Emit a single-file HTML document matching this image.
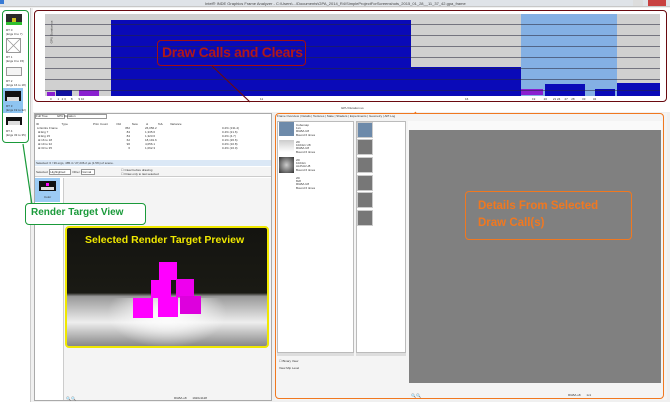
<!DOCTYPE html>
<html><head><style>
*{margin:0;padding:0;box-sizing:border-box}
body{width:670px;height:402px;overflow:hidden;background:#f0f0f0;font-family:"Liberation Sans",sans-serif;position:relative;font-size:3px;color:#222}
.a{position:absolute}
.t{position:absolute;font-size:3px;color:#333;white-space:nowrap}
</style></head><body>
<div class="a" style="left:0;top:0;width:670px;height:7px;background:#dfe3e8;border-bottom:1px solid #c8c8c8"></div>
<div class="t" style="left:205px;top:1px;font-size:4px;color:#444">Intel® INDE Graphics Frame Analyzer - C:\Users\...\Documents\GPA_2014_R4\SimpleProjectForScreenshots_2015_01_28__11_37_42.gpa_frame</div>
<div class="a" style="left:633px;top:0;width:10px;height:6px;background:#ddd"></div>
<div class="a" style="left:648px;top:0;width:18px;height:6px;background:#c84040"></div>
<div class="a" style="left:0;top:0;width:4px;height:4px;background:#3a7bd5"></div>
<div class="t" style="left:455px;top:8px">Go Graph &nbsp;&nbsp;&nbsp; ■ ■ GPU Duration &nbsp;&nbsp;&nbsp;&nbsp;&nbsp;&nbsp;&nbsp; ■ ■ GPU Duration &nbsp;&nbsp;&nbsp;&nbsp;&nbsp;&nbsp;&nbsp;&nbsp; ■ 37.2ms</div>

<div class="a" style="left:0;top:8px;width:31px;height:394px;background:#fff;border-right:1px solid #ccc"></div>
<div class="a" style="left:6px;top:14px;width:16px;height:11px;background:#2a2a2a"></div>
<div class="a" style="left:6px;top:22px;width:16px;height:3px;background:#2fbf2f"></div>
<div class="a" style="left:12px;top:18px;width:4px;height:4px;background:#d0c020"></div>
<div class="t" style="left:6px;top:28px">RT 0<br>(Ergs 0 to 7)</div>
<div class="a" style="left:6px;top:38px;width:15px;height:15px;border:1px solid #999;background:#fff"></div>
<svg class="a" style="left:6px;top:38px" width="15" height="15"><path d="M1 1L14 14M14 1L1 14" stroke="#999" stroke-width=".8"/></svg>
<div class="t" style="left:6px;top:55px">RT 1<br>(Ergs 0 to 15)</div>
<div class="a" style="left:6px;top:67px;width:16px;height:9px;border:1px solid #999;background:#f4f4f4"></div>
<div class="t" style="left:6px;top:79px">RT 2<br>(Ergs 16 to 18)</div>
<div class="a" style="left:3px;top:88px;width:20px;height:25px;background:#8ec4f0"></div>
<div class="a" style="left:5px;top:91px;width:16px;height:10px;background:#111"></div>
<div class="a" style="left:7px;top:97px;width:12px;height:4px;background:#ddd"></div>
<div class="t" style="left:6px;top:104px">RT 3<br>(Ergs 19 to 32)</div>
<div class="a" style="left:6px;top:117px;width:16px;height:8px;background:#111"></div>
<div class="a" style="left:8px;top:121px;width:12px;height:4px;background:#ddd"></div>
<div class="t" style="left:6px;top:129px">RT 4<br>(Ergs 33 to 35)</div>
<div class="a" style="left:2px;top:10px;width:27px;height:133px;border:1.5px solid #1a9a3a;border-radius:4px"></div>

<div class="a" style="left:33px;top:8px;width:637px;height:104px;background:#fff"></div>
<div class="a" style="left:45px;top:14px;width:615px;height:82px;background:#d0d0d0"></div>
<div class="a" style="left:111px;top:20px;width:300px;height:76px;background:#0a0ab8"></div>
<div class="a" style="left:411px;top:67px;width:110px;height:29px;background:#0a0ab8"></div>
<div class="a" style="left:521px;top:14px;width:96px;height:82px;background:#70a8e8;opacity:.8"></div>
<div class="a" style="left:521px;top:89px;width:22px;height:6px;background:#8a20d0"></div>
<div class="a" style="left:545px;top:84px;width:40px;height:12px;background:#0a0ab8"></div>
<div class="a" style="left:595px;top:89px;width:20px;height:7px;background:#0a0ab8"></div>
<div class="a" style="left:617px;top:83px;width:43px;height:13px;background:#0a0ab8"></div>
<div class="a" style="left:47px;top:92px;width:8px;height:4px;background:#8a20d0"></div>
<div class="a" style="left:56px;top:90px;width:16px;height:6px;background:#1010a0"></div>
<div class="a" style="left:79px;top:90px;width:20px;height:6px;background:#8a20d0"></div>
<div class="a" style="left:45px;top:14px;width:615px;height:82px;background-image:repeating-linear-gradient(to bottom,transparent 0,transparent 10px,rgba(40,40,60,.55) 10px,rgba(40,40,60,.55) 11px)"></div>
<div class="t" style="left:40px;top:30px;transform:rotate(-90deg);font-size:3px">GPU Duration us</div>
<div class="t" style="left:50px;top:97px">0 &nbsp;&nbsp;&nbsp;&nbsp;&nbsp; 1 &nbsp; 2 3 &nbsp;&nbsp;&nbsp;&nbsp; 8 &nbsp;&nbsp;&nbsp;&nbsp;&nbsp; 9 10</div>
<div class="t" style="left:260px;top:97px">11</div>
<div class="t" style="left:465px;top:97px">16</div>
<div class="t" style="left:532px;top:97px">19 &nbsp;&nbsp;&nbsp;&nbsp;&nbsp;&nbsp;&nbsp;&nbsp; 20 &nbsp;&nbsp;&nbsp;&nbsp;&nbsp; 21 24 &nbsp;&nbsp;&nbsp; 27 &nbsp;&nbsp; 28 &nbsp;&nbsp;&nbsp;&nbsp;&nbsp;&nbsp;&nbsp; 33 &nbsp;&nbsp;&nbsp;&nbsp;&nbsp;&nbsp;&nbsp; 34</div>
<div class="a" style="left:34px;top:10px;width:633px;height:92px;border:1.5px solid #6a0a10;border-radius:4px"></div>
<div class="a" style="left:157px;top:40px;width:149px;height:26px;border:1.5px solid #a01010;border-radius:4px"></div>
<div class="t" style="left:162px;top:44px;font-size:14px;color:#b01818;font-weight:bold;letter-spacing:-0.3px">Draw Calls and Clears</div>
<svg class="a" style="left:0;top:0" width="670" height="402"><path d="M212 66L250 102" stroke="#6a0a10" stroke-width="1.2"/><path d="M415 112L466 192" stroke="#f07820" stroke-width="1.5"/><path d="M23 144L32 205" stroke="#1a9a3a" stroke-width="1.2"/></svg>
<div class="t" style="left:341px;top:106px">GPU Duration us</div>

<div class="a" style="left:34px;top:113px;width:238px;height:288px;background:#fff;border:1px solid #aaa"></div>
<div class="a" style="left:35px;top:114px;width:30px;height:5px;border:1px solid #999;background:#fff"></div>
<div class="a" style="left:67px;top:114px;width:40px;height:5px;border:1px solid #999;background:#fff"></div>
<div class="t" style="left:36px;top:114px">Full Tree &nbsp;&nbsp;&nbsp;&nbsp;&nbsp;&nbsp;&nbsp;&nbsp;&nbsp; GPU Duration</div>
<div class="t" style="left:36px;top:122px">ID &nbsp;&nbsp;&nbsp;&nbsp;&nbsp;&nbsp;&nbsp;&nbsp;&nbsp;&nbsp;&nbsp;&nbsp;&nbsp;&nbsp;&nbsp;&nbsp;&nbsp;&nbsp;&nbsp;&nbsp;&nbsp;&nbsp;&nbsp;&nbsp;&nbsp; Type &nbsp;&nbsp;&nbsp;&nbsp;&nbsp;&nbsp;&nbsp;&nbsp;&nbsp;&nbsp;&nbsp;&nbsp;&nbsp;&nbsp;&nbsp;&nbsp;&nbsp;&nbsp;&nbsp;&nbsp;&nbsp;&nbsp;&nbsp;&nbsp;&nbsp;&nbsp;&nbsp;&nbsp; Prim Count &nbsp;&nbsp;&nbsp;&nbsp;&nbsp;&nbsp;&nbsp;&nbsp; Old &nbsp;&nbsp;&nbsp;&nbsp;&nbsp;&nbsp;&nbsp;&nbsp;&nbsp;&nbsp;&nbsp; New &nbsp;&nbsp;&nbsp;&nbsp;&nbsp;&nbsp;&nbsp;&nbsp; Δ &nbsp;&nbsp;&nbsp;&nbsp;&nbsp;&nbsp;&nbsp;&nbsp;&nbsp;&nbsp; %Δ &nbsp;&nbsp;&nbsp;&nbsp;&nbsp;&nbsp;&nbsp; Variance</div>
<div class="t" style="left:37px;top:126px;line-height:4px">⊟ Entire Frame<br>&nbsp;⊞ Erg 7<br>&nbsp;⊞ Erg 15<br>&nbsp;⊞ 16 to 18<br>&nbsp;⊞ 19 to 32<br>&nbsp;⊞ 33 to 35</div>
<div class="t" style="left:125px;top:126px;line-height:4px;text-align:right">352<br>84<br>84<br>62<br>96<br>6</div>
<div class="t" style="left:145px;top:126px;line-height:4px">26,056.2<br>1,335.6<br>1,323.6<br>18,191.6<br>4,056.1<br>1,062.3</div>
<div class="t" style="left:222px;top:126px;line-height:4px">0.2% (131.2)<br>0.4% (21.6)<br>0.2% (4.7)<br>0.1% (26.6)<br>0.2% (10.8)<br>0.4% (16.0)</div>
<div class="a" style="left:35px;top:160px;width:236px;height:6px;background:#dbe8f6"></div>
<div class="t" style="left:36px;top:161px">Selected: 6 / 39 ergs, 485.4 / 27,236.2 µs (1.5%) of scene.</div>
<div class="a" style="left:35px;top:167px;width:236px;height:10px;background:#f4f4f4;border-bottom:1px solid #ccc"></div>
<div class="t" style="left:36px;top:170px">Selected &nbsp;<span style="border:1px solid #999;background:#fff">Highlighted &nbsp;&nbsp;&nbsp;&nbsp;&nbsp;</span> Other <span style="border:1px solid #999;background:#fff">Normal &nbsp;&nbsp;</span></div>
<div class="t" style="left:121px;top:168px;line-height:4px">☐ Clear before drawing<br>☐ Draw only to last selected</div>
<div class="a" style="left:35px;top:178px;width:25px;height:24px;background:#9ccbf4"></div>
<div class="a" style="left:39px;top:181px;width:17px;height:10px;background:#111"></div>
<div class="a" style="left:41px;top:187px;width:13px;height:3px;background:#ddd"></div>
<div class="a" style="left:46px;top:183px;width:3px;height:3px;background:#f0f"></div>
<div class="t" style="left:44px;top:195px">Color</div>
<div class="a" style="left:63px;top:178px;width:208px;height:222px;background:#f4f4f4;border-left:1px solid #ccc"></div>
<div class="a" style="left:65px;top:226px;width:204px;height:122px;border:2px solid #f0e800;border-radius:4px;overflow:hidden;background:linear-gradient(#141410 0%,#1a1a14 55%,#999 58%,#eee 80%,#888 100%)">
<div class="a" style="left:40px;top:70px;width:120px;height:50px;background:radial-gradient(ellipse at 50% 30%,#fff 0%,rgba(255,255,255,.6) 35%,rgba(255,255,255,0) 70%)"></div>
<div class="a" style="left:92px;top:34px;width:18px;height:18px;background:#f0f"></div>
<div class="a" style="left:84px;top:52px;width:20px;height:18px;background:#f0f"></div>
<div class="a" style="left:109px;top:51px;width:18px;height:18px;background:#e0e"></div>
<div class="a" style="left:66px;top:70px;width:20px;height:20px;background:#f0f"></div>
<div class="a" style="left:91px;top:69px;width:20px;height:20px;background:#f0f"></div>
<div class="a" style="left:113px;top:68px;width:21px;height:18px;background:#d0d"></div>
<div class="t" style="left:18px;top:6px;font-size:10.5px;font-weight:bold;color:#f0e800">Selected Render Target Preview</div>
</div>
<div class="a" style="left:25px;top:203px;width:121px;height:22px;border:1.5px solid #1a9a3a;border-radius:4px;background:#fff"></div>
<div class="t" style="left:31px;top:207px;font-size:10px;font-weight:bold;color:#1a9a3a">Render Target View</div>
<div class="t" style="left:66px;top:396px;color:#3070c0;font-size:4px">🔍🔍</div>
<div class="t" style="left:174px;top:396px">RGBA u8 &nbsp;&nbsp;&nbsp;&nbsp;&nbsp; 1920x1128</div>

<div class="a" style="left:275px;top:113px;width:392px;height:287px;background:#f4f4f4"></div>
<div class="t" style="left:277px;top:114px;font-size:3px">Frame Overview | Details | Textures | State | Shaders | Experiments | Geometry | API Log</div>
<div class="a" style="left:277px;top:121px;width:77px;height:232px;background:#fff;border:1px solid #bbb"></div>
<div class="a" style="left:279px;top:122px;width:15px;height:14px;background:#6d8aaa"></div>
<div class="t" style="left:296px;top:124px;line-height:3.2px">Cubemap<br>1x1<br>RGBA U8<br>Bound 6 times</div>
<div class="a" style="left:279px;top:140px;width:15px;height:12px;background:linear-gradient(#ccc,#fff)"></div>
<div class="t" style="left:296px;top:141px;line-height:3.2px">2D<br>1024x1 U8<br>RGBA U8<br>Bound 6 times</div>
<div class="a" style="left:279px;top:157px;width:15px;height:16px;background:radial-gradient(#ccc,#333)"></div>
<div class="t" style="left:296px;top:159px;line-height:3.2px">2D<br>1024x1<br>ALPHA U8<br>Bound 6 times</div>
<div class="t" style="left:296px;top:177px;line-height:3.2px">2D<br>8x8<br>RGBA U8<br>Bound 6 times</div>
<div class="a" style="left:277px;top:353px;width:77px;height:3px;background:#ddd"></div>
<div class="t" style="left:279px;top:359px">☐ Binary View</div>
<div class="t" style="left:279px;top:366px">View Mip Level</div>
<div class="a" style="left:356px;top:121px;width:50px;height:232px;background:#fff;border:1px solid #bbb"></div>
<div class="a" style="left:357px;top:122px;width:16px;height:16px;background:#6d8aaa;border:1px solid #ccc"></div>
<div class="a" style="left:357px;top:139px;width:16px;height:16px;background:#777;border:1px solid #ccc"></div>
<div class="a" style="left:357px;top:157px;width:16px;height:16px;background:#777;border:1px solid #ccc"></div>
<div class="a" style="left:357px;top:175px;width:16px;height:16px;background:#777;border:1px solid #ccc"></div>
<div class="a" style="left:357px;top:192px;width:16px;height:16px;background:#777;border:1px solid #ccc"></div>
<div class="a" style="left:357px;top:210px;width:16px;height:16px;background:#777;border:1px solid #ccc"></div>
<div class="a" style="left:356px;top:353px;width:50px;height:3px;background:#ddd"></div>
<div class="a" style="left:408px;top:121px;width:254px;height:9px;background:#fafafa"></div>
<div class="a" style="left:409px;top:130px;width:252px;height:253px;background:#808080"></div>
<div class="t" style="left:411px;top:393px;color:#3070c0;font-size:4px">🔍🔍</div>
<div class="t" style="left:568px;top:393px">RGBA u8 &nbsp;&nbsp;&nbsp;&nbsp;&nbsp; 1x1</div>
<div class="a" style="left:275px;top:113px;width:389px;height:286px;border:1.5px solid #f07820;border-radius:4px"></div>
<div class="a" style="left:465px;top:191px;width:167px;height:49px;border:1.5px solid #f07820;border-radius:4px"></div>
<div class="t" style="left:478px;top:198px;font-size:11.5px;font-weight:bold;color:#f07820;line-height:17px">Details From Selected<br>Draw Call(s)</div>
</body></html>
